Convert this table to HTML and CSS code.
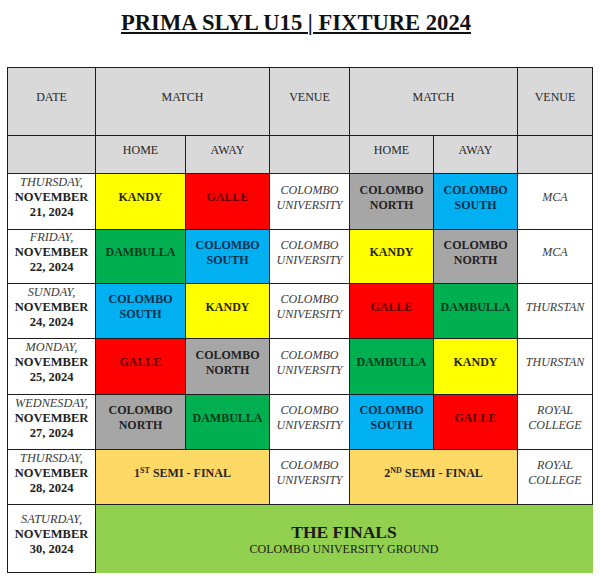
FILE: index.html
```html
<!DOCTYPE html>
<html lang="en">
<head>
<meta charset="utf-8">
<title>PRIMA SLYL U15 | FIXTURE 2024</title>
<link rel="stylesheet" href="styles.css">
</head>
<body>
<h1 class="title">PRIMA SLYL U15 | FIXTURE 2024</h1>
<table class="fixture">
  <colgroup>
    <col class="c-date"><col class="c-team1"><col class="c-team2"><col class="c-venue"><col class="c-team3"><col class="c-team4"><col class="c-venue2">
  </colgroup>
  <tr class="head1">
    <td class="hd">DATE</td>
    <td class="hd" colspan="2">MATCH</td>
    <td class="hd">VENUE</td>
    <td class="hd" colspan="2">MATCH</td>
    <td class="hd">VENUE</td>
  </tr>
  <tr class="head2">
    <td class="hd"></td>
    <td class="hd">HOME</td>
    <td class="hd">AWAY</td>
    <td class="hd"></td>
    <td class="hd">HOME</td>
    <td class="hd">AWAY</td>
    <td class="hd"></td>
  </tr>
  <tr class="r56">
    <td class="date"><i>THURSDAY,</i><b>NOVEMBER</b><b>21, 2024</b></td>
    <td class="team kandy">KANDY</td>
    <td class="team galle">GALLE</td>
    <td class="venue">COLOMBO<br>UNIVERSITY</td>
    <td class="team north">COLOMBO<br>NORTH</td>
    <td class="team south">COLOMBO<br>SOUTH</td>
    <td class="venue">MCA</td>
  </tr>
  <tr class="r54">
    <td class="date"><i>FRIDAY,</i><b>NOVEMBER</b><b>22, 2024</b></td>
    <td class="team dambulla">DAMBULLA</td>
    <td class="team south">COLOMBO<br>SOUTH</td>
    <td class="venue">COLOMBO<br>UNIVERSITY</td>
    <td class="team kandy">KANDY</td>
    <td class="team north">COLOMBO<br>NORTH</td>
    <td class="venue">MCA</td>
  </tr>
  <tr class="r55">
    <td class="date"><i>SUNDAY,</i><b>NOVEMBER</b><b>24, 2024</b></td>
    <td class="team south">COLOMBO<br>SOUTH</td>
    <td class="team kandy">KANDY</td>
    <td class="venue">COLOMBO<br>UNIVERSITY</td>
    <td class="team galle">GALLE</td>
    <td class="team dambulla">DAMBULLA</td>
    <td class="venue">THURSTAN</td>
  </tr>
  <tr class="r56">
    <td class="date"><i>MONDAY,</i><b>NOVEMBER</b><b>25, 2024</b></td>
    <td class="team galle">GALLE</td>
    <td class="team north">COLOMBO<br>NORTH</td>
    <td class="venue">COLOMBO<br>UNIVERSITY</td>
    <td class="team dambulla">DAMBULLA</td>
    <td class="team kandy">KANDY</td>
    <td class="venue">THURSTAN</td>
  </tr>
  <tr class="r55">
    <td class="date"><i>WEDNESDAY,</i><b>NOVEMBER</b><b>27, 2024</b></td>
    <td class="team north">COLOMBO<br>NORTH</td>
    <td class="team dambulla">DAMBULLA</td>
    <td class="venue">COLOMBO<br>UNIVERSITY</td>
    <td class="team south">COLOMBO<br>SOUTH</td>
    <td class="team galle">GALLE</td>
    <td class="venue">ROYAL<br>COLLEGE</td>
  </tr>
  <tr class="r55">
    <td class="date"><i>THURSDAY,</i><b>NOVEMBER</b><b>28, 2024</b></td>
    <td class="team semi" colspan="2">1<sup>ST</sup> SEMI - FINAL</td>
    <td class="venue">COLOMBO<br>UNIVERSITY</td>
    <td class="team semi" colspan="2">2<sup>ND</sup> SEMI - FINAL</td>
    <td class="venue">ROYAL<br>COLLEGE</td>
  </tr>
  <tr class="r68">
    <td class="date"><i>SATURDAY,</i><b>NOVEMBER</b><b>30, 2024</b></td>
    <td class="finals" colspan="6"><span class="finals-title">THE FINALS</span><span class="finals-sub">COLOMBO UNIVERSITY GROUND</span></td>
  </tr>
</table>
</body>
</html>
```
FILE: styles.css
```css
html, body {
  margin: 0;
  padding: 0;
  background: #ffffff;
}

body {
  font-family: "Liberation Serif", "Times New Roman", serif;
  color: #1a1a1a;
}

.title {
  margin: 0;
  padding: 10px 8px 0 0;
  height: 26px;
  font-size: 22.6px;
  line-height: 26px;
  font-weight: bold;
  text-align: center;
  text-decoration: underline;
  text-decoration-thickness: 2px;
  text-underline-offset: 2px;
  color: #111;
}

.fixture {
  margin: 31px 0 0 7px;
  border-collapse: collapse;
  table-layout: fixed;
  width: 585px;
}

.c-date { width: 88px; }
.c-team1 { width: 90px; }
.c-team2 { width: 84px; }
.c-venue { width: 80px; }
.c-team3 { width: 84px; }
.c-team4 { width: 84px; }
.c-venue2 { width: 75px; }

.fixture td {
  border: 1px solid #1e1e1e;
  padding: 0 0 8px 0;
  text-align: center;
  vertical-align: middle;
  font-size: 12px;
  line-height: 15px;
  overflow: hidden;
}

.head1 td { height: 59px; }
.head2 td { height: 29px; }
.r54 td { height: 45px; }
.r55 td { height: 46px; }
.r56 td { height: 47px; }
.r68 td { height: 59px; }

.hd {
  background: #d9d9d9;
  color: #262626;
}

.date i,
.date b {
  display: block;
}

.date i {
  font-style: italic;
  color: #3a3a3a;
  font-size: 12.3px;
}

.date b {
  font-weight: bold;
  color: #222;
  font-size: 12.5px;
}

.team {
  font-weight: bold;
  font-size: 12px;
  line-height: 15px;
}

.kandy { background: #ffff00; color: #262600; }
.galle { background: #ff0000; color: #5c0000; }
.dambulla { background: #00b050; color: #063a1c; }
.south { background: #00b0f0; color: #0c2e4c; }
.north { background: #a6a6a6; color: #222; }
.semi { background: #ffd966; color: #262626; }

.semi sup {
  font-size: 8px;
  line-height: 0;
  vertical-align: 4px;
}

.venue {
  font-style: italic;
  color: #3a3a3a;
}

.fixture td.finals {
  background: #92d050;
  border-right-color: #92d050;
  border-bottom-color: #92d050;
  padding: 0;
  color: #1a1a1a;
}

.finals-title {
  display: block;
  font-size: 17.5px;
  line-height: 20px;
  font-weight: bold;
}

.finals-sub {
  display: block;
  font-size: 12px;
  line-height: 14px;
}
```
